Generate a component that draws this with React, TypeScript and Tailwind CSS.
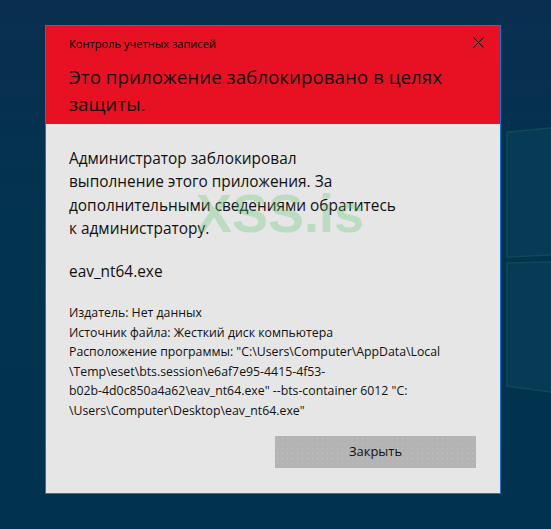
import React from "react";

const font = { fontFamily: '"Open Sans", "Noto Sans", sans-serif' };

export default function App() {
  return (
    <div
      className="relative w-[551px] h-[529px] overflow-hidden bg-[linear-gradient(180deg,#0a2f4e_0%,#02334f_40%,#01334f_100%)]"
      style={font}
    >
      {/* desktop decoration: faint windows logo panes */}
      <svg className="absolute left-0 top-0" width="551" height="529" viewBox="0 0 551 529">
        <polygon points="507,132 551,128 551,255 507,257" fill="#063a55" stroke="#0f4a56" strokeWidth="1.5" />
        <polygon points="507,263 551,262 551,392 507,386" fill="#063a55" stroke="#0f4a56" strokeWidth="1.5" />
      </svg>

      <div className="relative ml-[45px] mt-[25px] w-[456px] h-[469px] border border-[#1a78d2] flex flex-col bg-[#e6e6e6]">
        {/* header */}
        <div className="relative bg-[#e81123] h-[98px] pl-[23px] pr-[16px] pt-[10px]">
          <div className="text-[11.1px] leading-[16px] text-black">Контроль учетных записей</div>
          <div className="mt-[12px] text-[18.8px] leading-[27px] text-[#111]">
            Это приложение заблокировано в целях
            <br />
            защиты.
          </div>
          <svg
            className="absolute left-[427px] top-[11px]"
            width="11"
            height="11"
            viewBox="0 0 11 11"
          >
            <path d="M0.5 0.5 L10.5 10.5 M10.5 0.5 L0.5 10.5" stroke="#111" strokeWidth="1" />
          </svg>
        </div>

        {/* body */}
        <div className="flex flex-col pl-[23px] pr-[24px] pt-[23px] text-[#111]">
          <div className="text-[15.4px] leading-[23.3px]">
            Администратор заблокировал
            <br />
            выполнение этого приложения. За
            <br />
            дополнительными сведениями обратитесь
            <br />к администратору.
          </div>
          <div className="mt-[20px] text-[15.4px] leading-[23.3px]">eav_nt64.exe</div>
          <div className="mt-[20px] text-[12.3px] leading-[19.4px] whitespace-nowrap">
            Издатель: Нет данных
            <br />
            Источник файла: Жесткий диск компьютера
            <br />
            Расположение программы: "C:\Users\Computer\AppData\Local
            <br />
            \Temp\eset\bts.session\e6af7e95-4415-4f53-
            <br />
            b02b-4d0c850a4a62\eav_nt64.exe" --bts-container 6012 "C:
            <br />
            \Users\Computer\Desktop\eav_nt64.exe"
          </div>
          <div className="mt-[16px] flex justify-end">
            <button className="w-[201px] h-[32px] bg-[#b4b4b4] bg-[radial-gradient(circle,#c2c2c2_0.6px,transparent_0.8px)] bg-[length:5px_5px] text-[13px] text-[#111]">
              Закрыть
            </button>
          </div>
        </div>

        {/* watermark */}
        <div
          className="absolute left-[150px] top-[160px] text-[54px] font-bold leading-none text-[rgba(90,200,110,0.3)] pointer-events-none select-none"
          style={{ fontFamily: '"Liberation Sans", Arial, sans-serif' }}
        >
          XSS.is
        </div>
      </div>
    </div>
  );
}
